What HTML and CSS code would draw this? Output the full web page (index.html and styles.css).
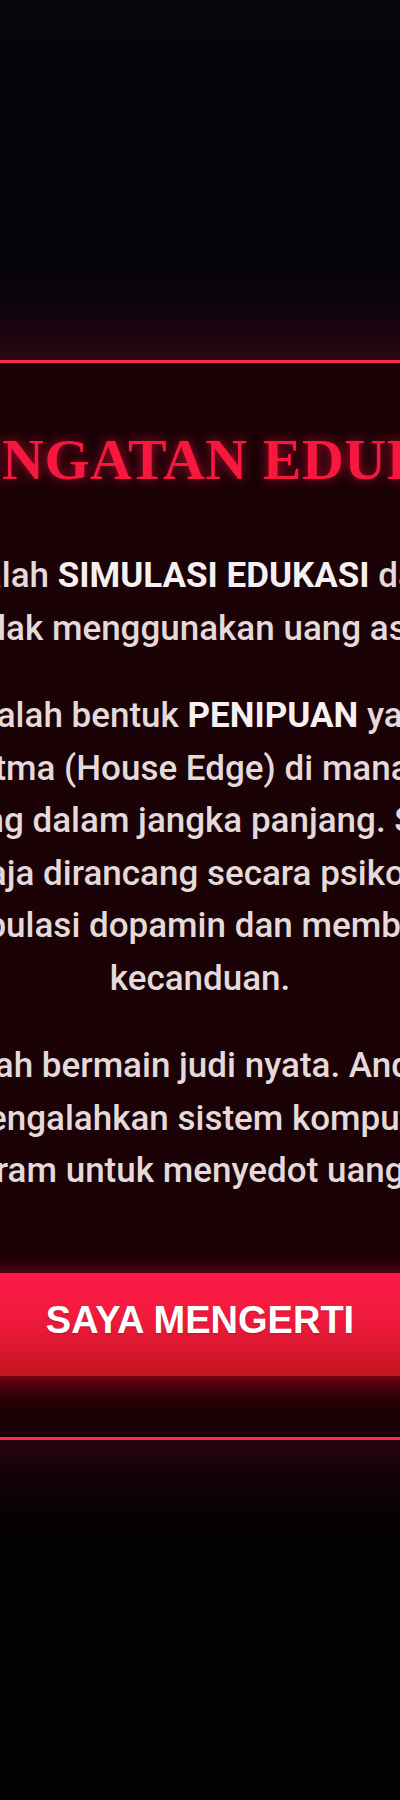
FILE: index.html
```html
<!DOCTYPE html>
<html lang="id">
<head>
<meta charset="utf-8">
<meta name="viewport" content="width=device-width, initial-scale=1">
<title>Peringatan Edukasi</title>
<link rel="stylesheet" href="styles.css">
</head>
<body>
  <div class="overlay">
    <div class="modal" role="dialog" aria-labelledby="modal-title">
      <h1 class="modal-title" id="modal-title">PERINGATAN EDUKASI</h1>
      <div class="modal-body">
        <p>Ini adalah <strong>SIMULASI EDUKASI</strong> dan kita<br>tidak menggunakan uang asli.</p>
        <p>Ia adalah bentuk <strong>PENIPUAN</strong> yang di<br>algoritma (House Edge) di mana situs<br>menang dalam jangka panjang. Semua<br>sengaja dirancang secara psikologis,<br>memanipulasi dopamin dan membuat Anda<br>kecanduan.</p>
        <p>Jangan pernah bermain judi nyata. Anda tidak akan<br>mengalahkan sistem komputer<br>diprogram untuk menyedot uang Anda.</p>
      </div>
      <button class="btn-ack" type="button">SAYA MENGERTI</button>
    </div>
  </div>
</body>
</html>
```

FILE: styles.css
```css
* {
  box-sizing: border-box;
}

html,
body {
  margin: 0;
  padding: 0;
}

body {
  background: linear-gradient(180deg, #06050c 0%, #040308 60%, #020103 100%);
  font-family: Roboto, "Liberation Sans", sans-serif;
}

/* full-screen backdrop that centres the dialog */
.overlay {
  height: 100vh;
  display: flex;
  align-items: center;
  justify-content: center;
  overflow: hidden;
}

.modal {
  flex: 0 0 900px;
  width: 900px;
  padding: 62px 40px 61px;
  background: #1a0206;
  border: 3px solid #ff2a50;
  box-shadow: 0 0 100px rgba(255, 23, 68, 0.3);
  text-align: center;
}

.modal-title {
  margin: 0 0 55.6px;
  padding-right: 8px;
  font-family: "Liberation Serif", "Times New Roman", serif;
  font-weight: 700;
  font-size: 58px;
  line-height: 1.2;
  letter-spacing: 0.5px;
  color: #f7173f;
  text-shadow: 0 0 12px rgba(255, 23, 68, 0.65);
  white-space: nowrap;
}

.modal-body p {
  margin: 0 0 35px;
  font-size: 35px;
  font-weight: 500;
  line-height: 1.5;
  color: #e4dada;
  white-space: nowrap;
}

.modal-body p:last-child {
  margin-bottom: 0;
}

.modal-body strong {
  font-weight: 700;
  color: #f6f1f1;
}

.btn-ack {
  display: block;
  width: 100%;
  margin-top: 75px;
  padding: 25px 0 33px;
  border: 0;
  border-radius: 12px;
  background: linear-gradient(180deg, #ff1a47 0%, #f01a3d 45%, #c4151f 100%);
  box-shadow: 0 0 22px rgba(255, 23, 68, 0.35), 0 12px 30px rgba(200, 0, 20, 0.45);
  color: #ffffff;
  font-family: "Liberation Sans", Arial, sans-serif;
  font-weight: 700;
  font-size: 38px;
  line-height: 1.2;
  text-shadow: 0 1px 2px rgba(0, 0, 0, 0.2);
  cursor: pointer;
}
```
